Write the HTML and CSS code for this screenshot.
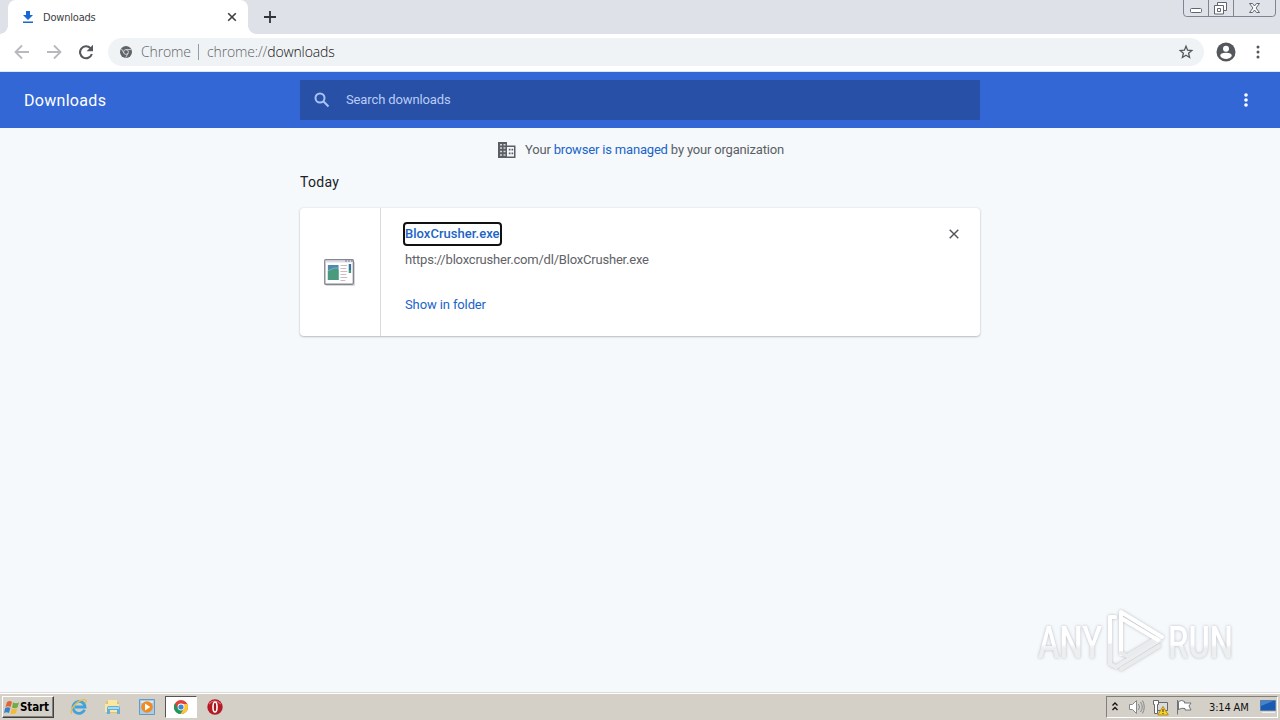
FILE: index.html
```html
<!DOCTYPE html>
<html lang="en">
<head>
<meta charset="utf-8">
<title>Downloads</title>
<link rel="stylesheet" href="styles.css">
</head>
<body>
<div class="screen">
  <header class="tabstrip">
    <div class="tab">
      <svg class="tab-icon" width="12" height="12" viewBox="0 0 12 12"><path fill="#1967d2" d="M4 0h4v4h3L6 9 1 4h3zM1 10.5h10V12H1z"/></svg>
      <span class="tab-title">Downloads</span>
      <svg class="tab-close" width="10" height="10" viewBox="0 0 10 10"><path d="M1.200 1.200l7.600 7.600M8.800 1.200L1.200 8.800" stroke="#3c4043" stroke-width="1.6"/></svg>
    </div>
    <svg class="new-tab" width="12" height="12" viewBox="0 0 12 12"><path d="M6 0v12M0 6h12" stroke="#303438" stroke-width="1.8"/></svg>
    <div class="window-buttons">
      <svg width="93" height="17" viewBox="0 0 93 17" fill="none" stroke="#7e8590"><path fill="#dfe3e9" d="M.5-1v14q0 3.500 3 3.500h86q3 0 3-3.500V-1"/><path d="M25.500 0v16M50.500 0v16"/><g stroke="#60656f"><rect x="7.500" y="8.500" width="11" height="4" rx="1" fill="#fff"/><path fill="#fff" d="M34.500 2.500h9v8h-9z"/><path fill="#fff" d="M31.500 5.500h9v8.500h-9z"/><path d="M34.500 8.500h3v3h-3z"/><path fill="#fff" d="M66.500 3.500h3l2 2.500 2-2.500h3l-3.500 4.500 3.500 4.500h-3l-2-2.500-2 2.500h-3L70 8z"/></g></svg>
    </div>
  </header>
  <nav class="toolbar">
    <svg class="nav-icon" width="16" height="16" viewBox="0 0 16 16" fill="none" stroke="#b7b9bc" stroke-width="1.800"><path d="M15 8H2M8 1.500L1.500 8 8 14.500"/></svg>
    <svg class="nav-icon" width="16" height="16" viewBox="0 0 16 16" fill="none" stroke="#b7b9bc" stroke-width="1.800"><path d="M1 8h13M8 1.500L14.500 8 8 14.500"/></svg>
    <svg class="nav-icon" width="16" height="16" viewBox="0 0 16 16"><path d="M12.500 4.200A6 6 0 1 0 13.800 10" fill="none" stroke="#55585c" stroke-width="2.100"/><path d="M15 .8v6.400H8.600z" fill="#55585c"/></svg>
    <div class="omnibox">
      <svg class="site-icon" width="12" height="12" viewBox="0 0 12 12"><circle cx="6" cy="6" r="6" fill="#5f6368"/><circle cx="6" cy="6" r="2.400" fill="none" stroke="#d7d9db" stroke-width=".9"/><path d="M6 3.600h5M3.900 7.200L1.500 3M8.100 7.200L5.700 11.500" stroke="#d7d9db" stroke-width=".9"/></svg>
      <span class="chip">Chrome</span><span class="divider"></span><span class="url">chrome://<b>downloads</b></span>
      <svg class="star" width="16" height="16" viewBox="0 0 16 16"><path d="M8 2.200l1.600 4 4.200.3-3.200 2.800 1 4.200L8 11.300l-3.600 2.200 1-4.200-3.200-2.800 4.200-.3z" fill="none" stroke="#55585c" stroke-width="1.300"/></svg>
    </div>
    <svg class="avatar" width="20" height="20" viewBox="0 0 20 20"><circle cx="10" cy="10" r="9.500" fill="#54575b"/><circle cx="10" cy="6.800" r="3" fill="#fff"/><path d="M4.200 14q0-3.200 5.800-3.200t5.800 3.200A7 7 0 0 1 4.200 14z" fill="#fff"/></svg>
    <svg class="menu" width="4" height="14" viewBox="0 0 4 14" fill="#54575b"><circle cx="2" cy="2" r="1.500"/><circle cx="2" cy="7" r="1.500"/><circle cx="2" cy="12" r="1.500"/></svg>
  </nav>
  <div class="appbar">
    <h1>Downloads</h1>
    <div class="search">
      <svg width="16" height="16" viewBox="0 0 16 16" fill="none" stroke="#a9c3f4" stroke-width="2"><circle cx="6" cy="6" r="4.500"/><path d="M9.300 9.300l5.200 5.200"/></svg>
      <span>Search downloads</span>
    </div>
    <svg class="more" width="4" height="14" viewBox="0 0 4 14" fill="#fff"><circle cx="2" cy="2" r="1.800"/><circle cx="2" cy="7" r="1.800"/><circle cx="2" cy="12" r="1.800"/></svg>
  </div>
  <main class="content">
    <p class="managed">
      <svg width="18" height="16" viewBox="0 0 18 16"><path d="M0 0h9v3.500h8.500V16H0z" fill="#5b5f64"/><path d="M9 5h7v9.500H9z" fill="#f6f9fc"/><path fill="#d4d8dc" d="M2 2h2v1.500H2zM5.500 2h2v1.500h-2zM2 5.300h2v1.500H2zM5.500 5.300h2v1.500h-2zM2 8.700h2v1.500H2zM5.500 8.700h2v1.500h-2zM2 12.200h2v1.500H2zM5.500 12.200h2v1.500h-2z"/><path fill="#5b5f64" d="M10.800 6.800h1.700v1.700h-1.700zM13.500 6.800h1.700v1.700h-1.700zM10.800 10.500h1.700v1.700h-1.700zM13.500 10.500h1.700v1.700h-1.700z"/></svg>
      <span>Your <a>browser is managed</a> by your organization</span>
    </p>
    <h2>Today</h2>
    <article class="card">
      <div class="thumb">
        <svg width="31" height="27" viewBox="0 0 32 27" preserveAspectRatio="none"><path d="M2 26.500h29.500V3" fill="none" stroke="#d5d7da"/><rect x=".8" y=".8" width="29.500" height="24.500" rx="1" fill="#fff" stroke="#85858d" stroke-width="1.400"/><path d="M1.500 1.500h28v2h-28z" fill="#d9dce8"/><path d="M22 2h1.500M25 2h1.500M28 2h1.500" stroke="#555b68"/><path fill="#4c8baa" d="M4 6h11v15H4z"/><path fill="#4a9a7d" d="M4 12q6-3 11-1v10H4z"/><path d="M4 12q6-4 11-3" stroke="#79b9b1" fill="none"/><path d="M17 6.500h7M17 9.500h6M17 12.500h7M17 15.500h6M17 18.500h7M17 21.500h5" stroke="#cdbabb"/><path fill="#3473a0" d="M25.500 5H28v6h-2.500z"/><path fill="#47967f" d="M25.500 11H28v3h-2.500z"/></svg>
      </div>
      <div class="details">
        <a class="filename">BloxCrusher.exe</a>
        <span class="source">https://bloxcrusher.com/dl/BloxCrusher.exe</span>
        <a class="folder">Show in folder</a>
      </div>
      <svg class="dismiss" width="10" height="10" viewBox="0 0 10 10"><path d="M.7.7l8.600 8.600M9.300.7L.7 9.300" stroke="#505357" stroke-width="1.400"/></svg>
    </article>
  </main>
  <div class="watermark">
    <svg width="216" height="80" viewBox="0 0 216 80">
      <defs><linearGradient id="fade" x2="0" y2="1"><stop offset=".52" stop-color="#fff"/><stop offset=".6" stop-color="#eceeef"/></linearGradient></defs>
      <g class="mark" fill="url(#fade)"><text class="brand" x="4" y="53" textLength="64" lengthAdjust="spacingAndGlyphs">ANY</text><text class="brand" x="134" y="53" textLength="65" lengthAdjust="spacingAndGlyphs">RUN</text></g>
      <g class="mark" fill="none" stroke-width="4" stroke-linejoin="round" stroke-linecap="round"><path d="M81 12h-5v47l6 3 44-27" stroke="#ebedef"/><path d="M87 49V7l41 25M81 12h-5v25" stroke="#fff"/><path d="M87 48l6 3 30-18M87 64l38-23" stroke="#e9ebed"/><path d="M87 13l37 22" stroke="#fff"/></g>
    </svg>
  </div>
  <footer class="taskbar">
    <button class="start">
      <svg width="16" height="15" viewBox="0 0 16 15"><path fill="#e46332" d="M3 2q3-2 5 0L6.600 7Q4 5.500 1.500 7z"/><path fill="#6fac45" d="M9 2.500q3 1.500 6 0L13.500 7.500q-3 1.500-5.500 0z"/><path fill="#3980c5" d="M1.200 8q2.800-1.500 5.100 0L5 13q-2.500-1.500-5 0z"/><path fill="#f2bb34" d="M7.700 8.500q2.500 1.500 5.500 0L12 13q-3 1.800-5.500.5z"/></svg>
      <span>Start</span>
    </button>
    <div class="launcher">
      <svg width="18" height="18" viewBox="0 0 18 18" fill="none"><path d="M14.500 11.800A6 6 0 1 1 15 9H5" stroke="#3fa3dd" stroke-width="2.800"/><path d="M2 15.500C-1 14 5 3 13.500 1.700q4-.5 2 3.300" stroke="#e6bd48" stroke-width="1.400"/></svg>
      <svg width="18" height="18" viewBox="0 0 18 18"><path fill="#e2c365" d="M2 3h5l1 1h7v11H2z"/><path fill="#f8e8a1" d="M4 2h9v5H4zM1 6h14v8H1z"/><path fill="#64aedc" d="M3 10q0-2 2-2h9q2 0 2 2v6h-3v-4H6v4H3z"/><path fill="#a9d9f0" d="M4 9h11v2H4z"/></svg>
      <svg width="18" height="18" viewBox="0 0 18 18"><path fill="#a9cce9" stroke="#6799c6" d="M1.500 1.500h15v15h-15z"/><path fill="#d9eaf7" d="M3 3h12v2H3z"/><circle cx="9" cy="9" r="5.800" fill="#ef8b20"/><path fill="#fff" d="M7 5.500l5.300 3.500L7 12.500z"/></svg>
      <div class="active-app">
        <svg width="14" height="14" viewBox="0 0 14 14"><circle cx="7" cy="7" r="7" fill="#db4437"/><path fill="#16995b" d="M.9 3.500A7 7 0 0 0 6.500 14l3.300-5.500H4z"/><path fill="#fbc735" d="M7 4h6.300A7 7 0 0 1 6.500 14L10 8.500z"/><circle cx="7" cy="7" r="3.400" fill="#fff"/><circle cx="7" cy="7" r="2.600" fill="#4285d8"/></svg>
      </div>
      <svg class="opera" width="16" height="16" viewBox="0 0 16 16"><circle cx="8" cy="8" r="7.700" fill="#b51923"/><path d="M2 5q5-6 12 0" stroke="#df6770" stroke-width="1.200" fill="none"/><ellipse cx="8" cy="8" rx="2" ry="5" fill="#a11620" stroke="#fff" stroke-width="1.6"/></svg>
    </div>
    <div class="tray">
      <svg width="8" height="10" viewBox="0 0 8 10" fill="none" stroke="#111" stroke-width="1.300"><path d="M1.500 3.500L4 1l2.500 2.500M1.500 8L4 5.500 6.500 8"/></svg>
      <svg class="volume" width="18" height="16" viewBox="0 0 18 16" stroke="#85888c" fill="none"><path fill="#fff" d="M1.500 5.500h3l4-4v13l-4-4h-3z"/><path d="M10.500 5q2 3 0 6M12.500 3q3.500 5 0 10M14.500 1.500q3.500 6.500 0 13"/></svg>
      <svg class="network" width="18" height="17" viewBox="0 0 18 17"><path fill="#d9dbde" stroke="#66696c" d="M5.500 3.500h10v8h-10z"/><path fill="#fff" stroke="#66696c" d="M1.500 1.500h5v4h-1v9h-3v-9h-1z"/><path fill="#f8d22c" stroke="#ba8b0e" d="M11 7.500l5.300 8.500H5.700z"/><path d="M11 10v3M11 14v1" stroke="#333"/></svg>
      <svg width="17" height="16" viewBox="0 0 17 16"><path fill="#fff" stroke="#707478" d="M2.500 11V2.500q3-2 6 0v1.500h6.500l-2 3 2 4h-6V9.500q-3-1-6.500 1"/><path d="M1.500 1v14.500" stroke="#707478"/></svg>
      <time>3:14 AM</time>
      <svg class="desktop" width="16" height="14" viewBox="0 0 16 14"><path fill="#175cb2" stroke="#5b7ea7" d="M.5.500h15v10H.5z"/><path fill="#4384cf" d="M1 1h12L1 6z"/><path fill="#ecf0f4" d="M2 12h13v1H2z"/></svg>
    </div>
  </footer>
</div>
</body>
</html>
```
FILE: styles.css
```css
* { box-sizing: border-box; }
body { margin: 0; font-family: Roboto, sans-serif; }
svg { display: block; flex: none; }
h1, h2, p { margin: 0; font-weight: 400; }
.screen { position: relative; width: 1280px; height: 720px; overflow: hidden; display: flex; flex-direction: column; background: #f5f9fc; }
.tabstrip { height: 34px; display: flex; background: #dee1e8; flex: none; }
.tab { position: relative; width: 240px; margin-left: 8px; padding: 0 11px 0 14px; display: flex; align-items: center; background: #fff; border-radius: 8px 8px 0 0; }
.tab::before, .tab::after { content: ""; position: absolute; bottom: 0; width: 8px; height: 8px; }
.tab::before { left: -8px; background: radial-gradient(circle at 0 0, #dee1e8 7.500px, #fff 8px); }
.tab::after { right: -8px; background: radial-gradient(circle at 100% 0, #dee1e8 7.500px, #fff 8px); }
.tab-title { margin-left: 9px; flex: 1; font: 11px "DejaVu Sans Condensed", "DejaVu Sans", sans-serif; font-stretch: condensed; letter-spacing: -.2px; color: #3c4043; }
.new-tab { margin: 11px 0 0 16px; }
.window-buttons { margin: 0 4px 0 auto; }
.toolbar { height: 38px; padding: 0 20px 2px 14px; display: flex; align-items: center; background: #fff; border-bottom: 1px solid #d8e8f8; flex: none; }
.nav-icon { margin-right: 16px; }
.omnibox { width: 1096px; height: 28px; margin-left: -2px; padding: 0 10px 0 12px; display: flex; align-items: center; border-radius: 14px; background: #f0f3f5; font: 14px "Open Sans", sans-serif; color: #5f6368; }
.chip { margin-left: 9px; width: 57px; font-weight: 300; letter-spacing: -.15px; }
.divider { width: 1px; height: 16px; margin-right: 8px; background: #999da1; }
.url { font-weight: 300; letter-spacing: -.14px; }
.url b { font-weight: 300; color: #111; }
.star { margin-left: auto; }
.avatar { margin-left: 12px; }
.menu { margin-left: auto; }
.appbar { height: 56px; display: grid; grid-template-columns: 300px 680px 1fr; align-items: center; background: #3367d6; flex: none; }
h1 { padding: 1px 0 0 24px; font-size: 16px; letter-spacing: .3px; color: #fff; }
.search { height: 40px; padding: 0 14px; display: flex; align-items: center; gap: 16px; background: #2850a7; font-size: 13px; color: #b9cdf6; letter-spacing: -.12px; }
.search span { padding-bottom: 2px; }
.more { justify-self: end; margin-right: 32px; }
.content { width: 680px; margin: 0 auto; flex: 1; }
.managed { height: 44px; display: flex; justify-content: center; align-items: center; gap: 9px; font-size: 13px; letter-spacing: -.18px; color: #5b5f64; padding-left: 2px; }
.managed span { padding-bottom: 2px; }
a { color: #2064c8; }
h2 { height: 36px; padding-top: 1px; line-height: 19px; font-size: 14px; letter-spacing: .3px; color: #202124; }
.card { height: 128px; display: flex; background: #fff; border-radius: 4px; box-shadow: 0 1px 2px #888d9288, 0 0 2px #b8bec466; }
.thumb { width: 81px; padding: 51px 0 0 24px; border-right: 1px solid #dadde0; }
.details { flex: 1; padding: 14px 0 0 22px; display: flex; flex-direction: column; align-items: flex-start; font-size: 13px; line-height: 18px; }
.filename { width: 99px; height: 24px; padding-top: 1px; border: 2px solid #111; border-radius: 4px; font-weight: 500; letter-spacing: .03px; white-space: nowrap; }
.source { margin: 5px 0 0 2px; color: #5f6368; letter-spacing: -.2px; }
.folder { margin: 27px 0 0 2px; letter-spacing: -.12px; }
.dismiss { margin: 21px 21px 0 0; }
.watermark { position: absolute; left: 1034px; top: 605px; }
.mark { filter: drop-shadow(0 0 1.500px #999da3a8); }
.brand { font: 500 44px Roboto, sans-serif; }
.taskbar { height: 28px; padding: 2px 2px 1px; display: flex; align-items: center; background: #d4d0c8; border-top: 1px solid #dedbd5; box-shadow: inset 0 1px #fff; font-family: "DejaVu Sans Condensed", "DejaVu Sans", sans-serif; font-stretch: condensed; flex: none; }
.start { height: 22px; width: 52px; padding: 0 1px; display: flex; align-items: center; gap: 0; background: #d4d0c8; border: 1px solid; border-color: #fff #404040 #404040 #fff; box-shadow: inset -1px -1px #808080; font-family: inherit; font-stretch: inherit; font-weight: 700; font-size: 11.500px; letter-spacing: -.1px; color: #000; }
.launcher { display: flex; align-items: center; margin-left: 16px; gap: 16px; }
.active-app { width: 32px; height: 22px; margin-left: -7px; display: grid; place-items: center; background: #fff; border: 1px solid; border-color: #555 #fff #fff #555; }
.opera { margin-left: -6px; }
.tray { width: 172px; height: 22px; margin-left: auto; padding: 0 1px 0 4px; display: flex; align-items: center; border: 1px solid; border-color: #808080 #fff #fff #808080; gap: 6px; font-size: 11px; letter-spacing: -.15px; color: #111; }
.volume { margin-left: 3px; }
time { margin-left: 10px; white-space: nowrap; }
.desktop { margin-left: auto; }
```
